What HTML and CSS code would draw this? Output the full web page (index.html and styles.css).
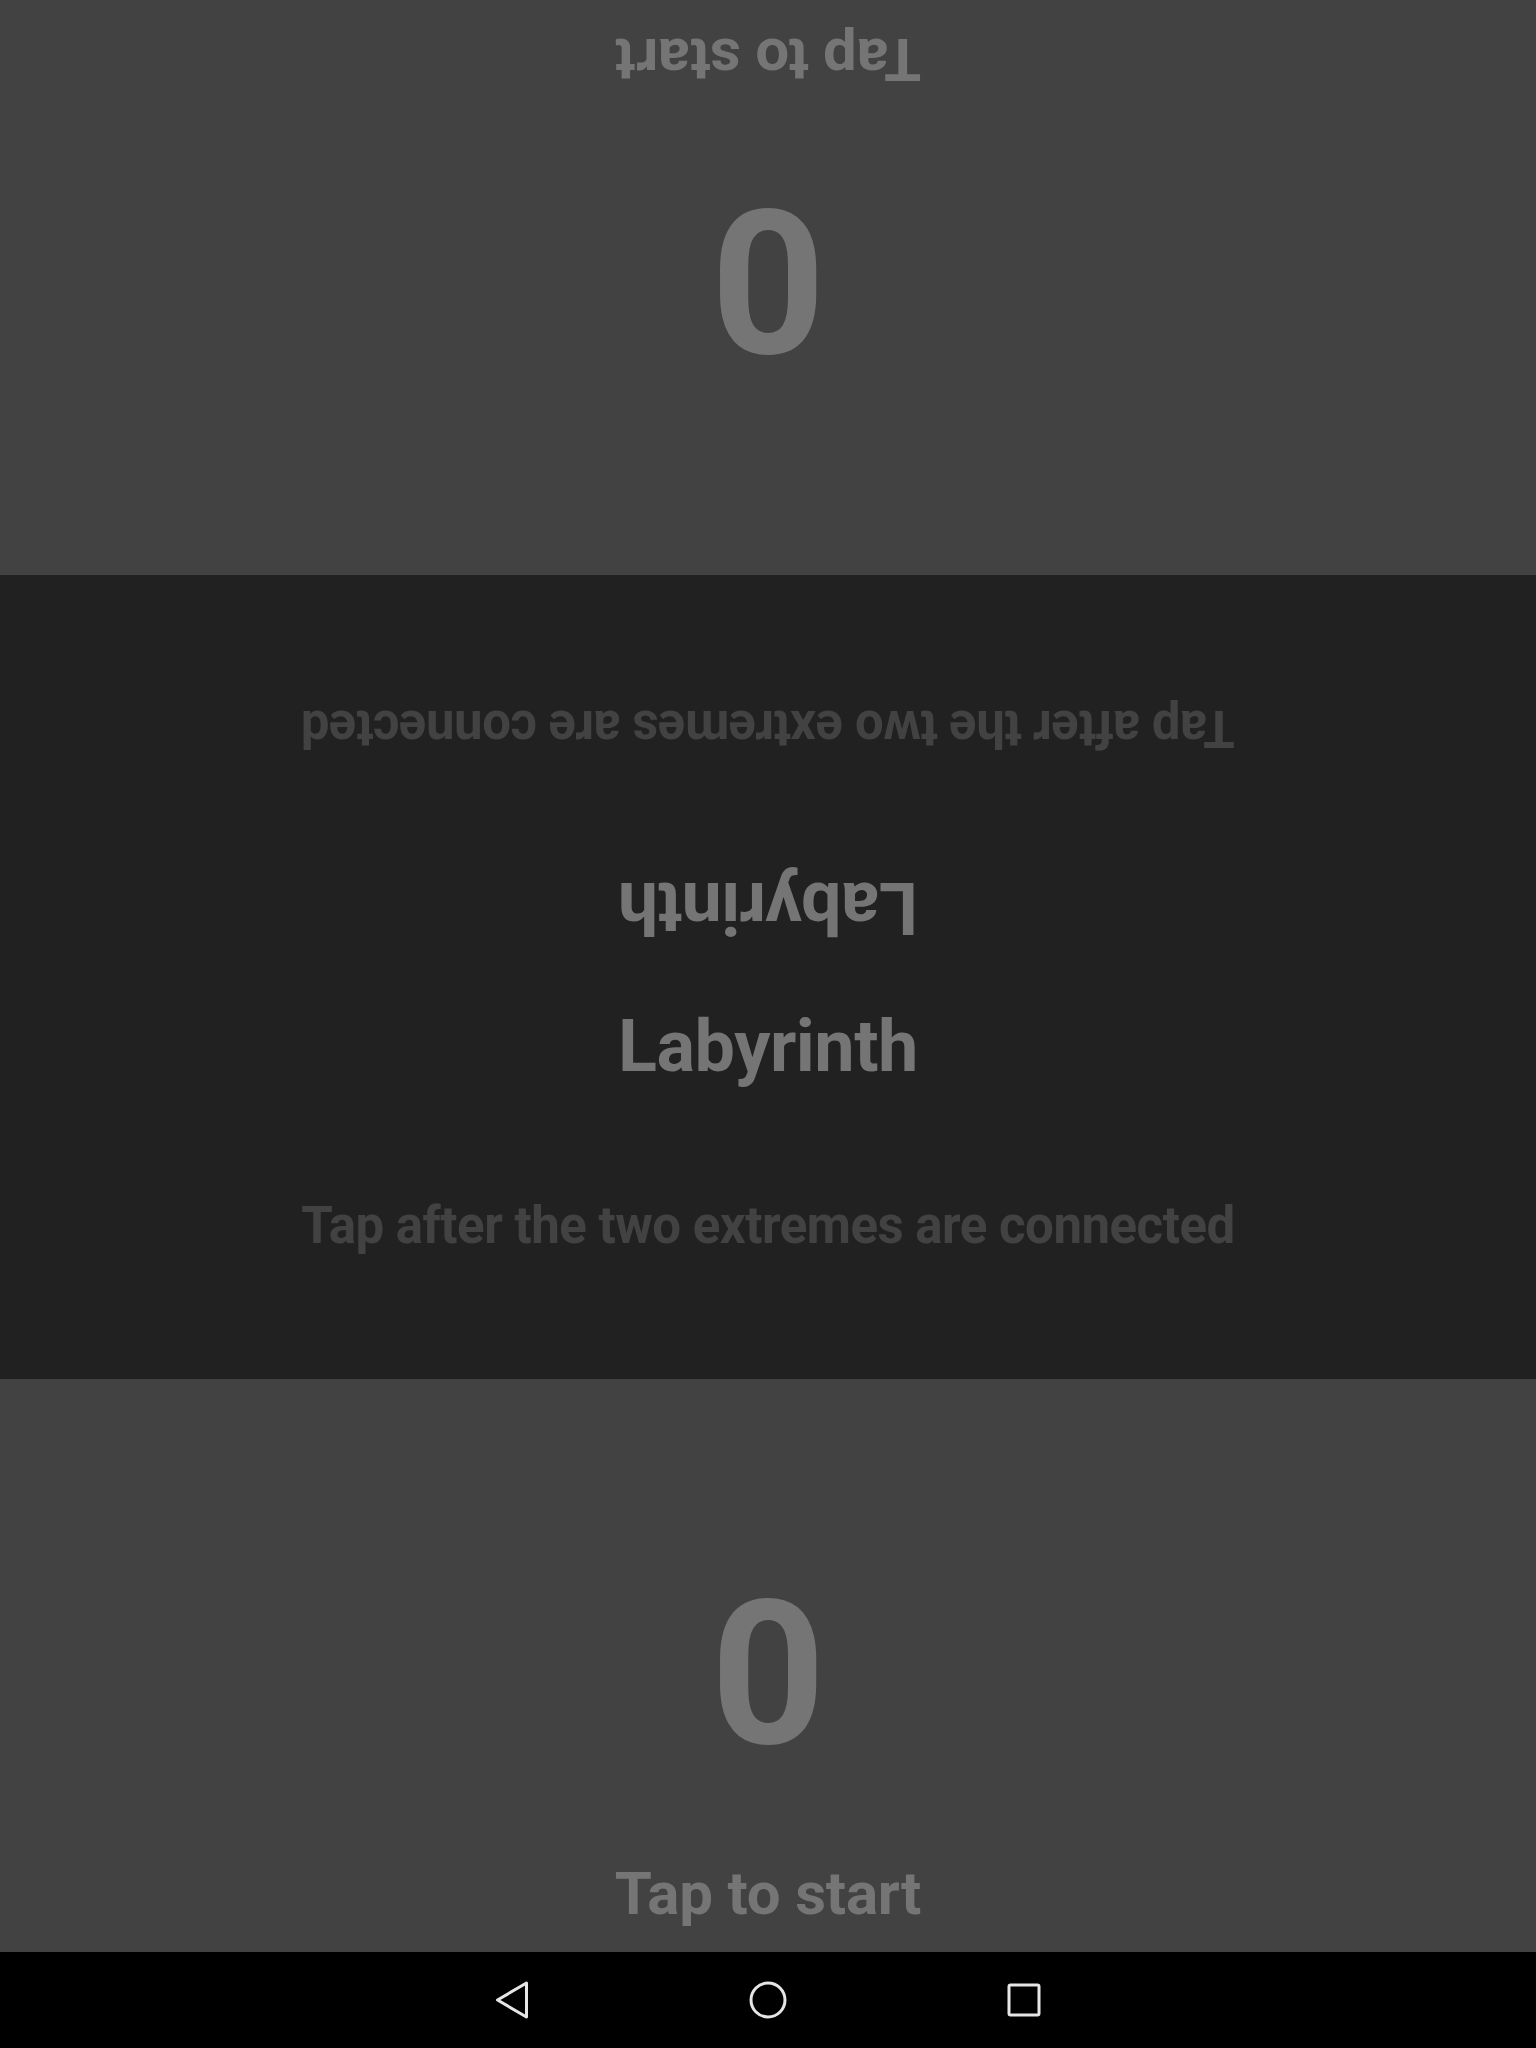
FILE: index.html
```html
<!DOCTYPE html>
<html lang="en">
<head>
<meta charset="utf-8">
<title>Labyrinth</title>
<link rel="stylesheet" href="styles.css">
</head>
<body>
<div class="screen">
  <section class="player player-top flipped">
    <div class="score">0</div>
    <div class="hint">Tap to start</div>
  </section>
  <section class="board">
    <div class="half flipped">
      <div class="title">Labyrinth</div>
      <div class="desc">Tap after the two extremes are connected</div>
    </div>
    <div class="half">
      <div class="title">Labyrinth</div>
      <div class="desc">Tap after the two extremes are connected</div>
    </div>
  </section>
  <section class="player player-bottom">
    <div class="score">0</div>
    <div class="hint">Tap to start</div>
  </section>
  <nav class="navbar">
    <svg class="nav-icon" viewBox="0 0 64 64" width="64" height="64" aria-label="Back">
      <path d="M46.5 15 L17.5 32 L46.5 49 Z" fill="none" stroke="#e6e6e6" stroke-width="3" stroke-linejoin="round"/>
    </svg>
    <svg class="nav-icon" viewBox="0 0 64 64" width="64" height="64" aria-label="Home">
      <circle cx="32" cy="32" r="17" fill="none" stroke="#e6e6e6" stroke-width="3"/>
    </svg>
    <svg class="nav-icon" viewBox="0 0 64 64" width="64" height="64" aria-label="Recents">
      <rect x="17" y="17" width="30" height="30" rx="1.5" fill="none" stroke="#e6e6e6" stroke-width="3"/>
    </svg>
  </nav>
</div>
</body>
</html>
```
FILE: styles.css
```css
* {
  box-sizing: border-box;
}

html, body {
  margin: 0;
  padding: 0;
  background: #000;
}

body {
  font-family: Roboto, "Liberation Sans", sans-serif;
  font-weight: 700;
}

.screen {
  width: 1536px;
  height: 2048px;
  display: flex;
  flex-direction: column;
}

.flipped {
  transform: rotate(180deg);
}

.player {
  background: #424242;
  color: #757575;
  display: flex;
  flex-direction: column;
  align-items: center;
  padding-top: 196px;
}

.player-top {
  height: 575px;
  padding-top: 197px;
}

.player-bottom {
  height: 573px;
}

.score {
  font-size: 200px;
  line-height: 200px;
  height: 200px;
}

.hint {
  margin-top: 89px;
  font-size: 60px;
  line-height: 60px;
  letter-spacing: -0.2px;
}

.board {
  height: 804px;
  background: #212121;
  display: flex;
  flex-direction: column;
}

.half {
  height: 402px;
  display: flex;
  flex-direction: column;
  align-items: center;
  padding-top: 34px;
}

.title {
  font-size: 72px;
  line-height: 72px;
  color: #757575;
  letter-spacing: -0.5px;
}

.desc {
  margin-top: 117px;
  font-size: 51px;
  line-height: 52px;
  color: #424242;
  letter-spacing: -0.5px;
}

.navbar {
  height: 96px;
  background: #000;
  display: flex;
  justify-content: center;
  align-items: center;
  gap: 192px;
}

.nav-icon {
  display: block;
}
```
